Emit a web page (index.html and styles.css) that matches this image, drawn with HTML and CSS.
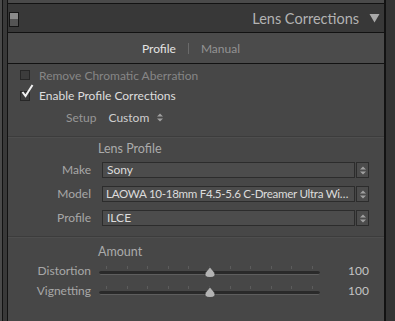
FILE: index.html
```html
<!DOCTYPE html>
<html>
<head>
<meta charset="utf-8">
<link rel="stylesheet" href="styles.css">
</head>
<body>
<div class="frame">
  <div class="edge"></div>
  <div class="rail"></div>
  <div class="main">
    <div class="prev"></div>
    <div class="panel">
      <div class="header">
        <div class="switch"><span class="sw-top"></span><span class="sw-bot"></span></div>
        <div class="title">Lens Corrections</div>
        <svg class="tri" width="11" height="10" viewBox="0 0 11 10"><path d="M0.5 1 L10.5 1 L5.5 9.5 Z" fill="#a9a9a9"/></svg>
      </div>
      <div class="tabs">
        <span class="tab active">Profile</span>
        <span class="tab-sep"></span>
        <span class="tab">Manual</span>
      </div>
      <div class="content">
        <div class="check-row dim">
          <span class="box"></span>
          <span>Remove Chromatic Aberration</span>
        </div>
        <div class="check-row on">
          <span class="box">
            <svg class="tick" width="16" height="16" viewBox="0 0 16 16"><path d="M2.5 9 L5.5 13 L12.5 2" fill="none" stroke="#f2f2f2" stroke-width="2"/></svg>
          </span>
          <span>Enable Profile Corrections</span>
        </div>
        <div class="setup-row">
          <span class="setup-label">Setup</span>
          <span class="setup-value">Custom</span>
          <svg class="updown" width="6" height="9" viewBox="0 0 6 9"><path d="M0 3.5 L3 0.5 L6 3.5 Z M0 5.5 L3 8.5 L6 5.5 Z" fill="#a0a0a0"/></svg>
        </div>
        <div class="sep"></div>
        <div class="heading">Lens Profile</div>
        <div class="form">
          <span class="label">Make</span>
          <div class="select"><span class="sel-text">Sony</span><span class="spin"><svg width="6" height="9" viewBox="0 0 6 9"><path d="M0 3.5 L3 0.5 L6 3.5 Z M0 5.5 L3 8.5 L6 5.5 Z" fill="#a0a0a0"/></svg></span></div>
          <span class="label">Model</span>
          <div class="select"><span class="sel-text long">LAOWA 10-18mm F4.5-5.6 C-Dreamer Ultra Wi…</span><span class="spin"><svg width="6" height="9" viewBox="0 0 6 9"><path d="M0 3.5 L3 0.5 L6 3.5 Z M0 5.5 L3 8.5 L6 5.5 Z" fill="#a0a0a0"/></svg></span></div>
          <span class="label">Profile</span>
          <div class="select"><span class="sel-text">ILCE</span><span class="spin"><svg width="6" height="9" viewBox="0 0 6 9"><path d="M0 3.5 L3 0.5 L6 3.5 Z M0 5.5 L3 8.5 L6 5.5 Z" fill="#a0a0a0"/></svg></span></div>
        </div>
        <div class="sep sep2"></div>
        <div class="heading heading2">Amount</div>
        <div class="sliders">
          <span class="label">Distortion</span>
          <div class="slider">
            <div class="ticks"><i></i><i></i><i></i><i></i><i></i><i></i><i></i><i></i><i></i><i></i><i></i></div>
            <div class="track"></div>
            <svg class="thumb" width="12" height="12" viewBox="0 0 12 12"><path d="M6 0.5 C7 3 11 6 11 8.5 C11 10.5 9.5 11.5 6 11.5 C2.5 11.5 1 10.5 1 8.5 C1 6 5 3 6 0.5 Z" fill="#b4b4b4" stroke="#3a3a3a" stroke-width="0.8"/></svg>
          </div>
          <span class="value">100</span>
          <span class="label">Vignetting</span>
          <div class="slider">
            <div class="ticks"><i></i><i></i><i></i><i></i><i></i><i></i><i></i><i></i><i></i><i></i><i></i></div>
            <div class="track"></div>
            <svg class="thumb" width="12" height="12" viewBox="0 0 12 12"><path d="M6 0.5 C7 3 11 6 11 8.5 C11 10.5 9.5 11.5 6 11.5 C2.5 11.5 1 10.5 1 8.5 C1 6 5 3 6 0.5 Z" fill="#b4b4b4" stroke="#3a3a3a" stroke-width="0.8"/></svg>
          </div>
          <span class="value">100</span>
        </div>
      </div>
    </div>
  </div>
  <div class="rail-r"></div>
</div>
</body>
</html>
```

FILE: styles.css
```css
* { box-sizing: border-box; }
html, body { margin: 0; padding: 0; }
body {
  width: 395px;
  height: 321px;
  overflow: hidden;
  background: #474747;
  font-family: Lato, "Open Sans", sans-serif;
  font-size: 12px;
  color: #b0b0b0;
}
.frame {
  display: flex;
  height: 321px;
}
.edge {
  width: 2px;
  background: #4a4a4a;
}
.rail {
  width: 5px;
  background: #393939;
  border-left: 1px solid #121212;
}
.main {
  width: 378px;
  display: flex;
  flex-direction: column;
  border-left: 1px solid #121212;
  border-right: 1px solid #121212;
}
.rail-r {
  flex: 1;
  background: #343434;
  border-left: 1px solid #121212;
}
.prev {
  height: 4px;
  background: #4a4a4a;
  border-bottom: 1px solid #121212;
}
.panel {
  flex: 1;
  display: flex;
  flex-direction: column;
  background: #474747;
}
.header {
  height: 29px;
  background: #383838;
  border-bottom: 1px solid #121212;
  display: flex;
  align-items: center;
  padding: 0 3px 0 1px;
}
.switch {
  width: 10px;
  height: 15px;
  border: 1px solid #141414;
  display: flex;
  flex-direction: column;
  margin-top: 2px;
}
.sw-top { flex: 1; background: #8a8a8a; }
.sw-bot { flex: 1; background: #545454; }
.title {
  margin-left: auto;
  font-size: 14.5px;
  color: #b3b3b3;
  margin-right: 10px;
  padding-top: 1px;
}
.tri { margin-right: 1px; }
.tabs {
  height: 31px;
  background: #4b4b4b;
  border-bottom: 1px solid #121212;
  display: flex;
  align-items: center;
  justify-content: center;
  padding-right: 10px;
  gap: 12px;
  padding-top: 1px;
}
.tab { color: #939393; }
.tab.active { color: #e4e4e4; }
.tab-sep {
  width: 1px;
  height: 11px;
  background: #6a6a6a;
}
.content {
  flex: 1;
  display: flex;
  flex-direction: column;
  padding-top: 1px;
}
.check-row {
  height: 20px;
  display: flex;
  align-items: center;
  padding-left: 12px;
  gap: 9px;
}
.check-row.dim { color: #868686; }
.check-row.on { color: #dedede; }
.box {
  position: relative;
  width: 10px;
  height: 10px;
  border: 1px solid #272727;
  background: #3c3c3c;
}
.check-row.on .box { margin-top: 2px; }
.tick {
  position: absolute;
  left: -1px;
  top: -9px;
}
.setup-row {
  height: 22px;
  display: flex;
  align-items: center;
  padding-left: 58px;
  margin-top: 1px;
}
.setup-label { color: #979797; }
.setup-value { color: #cfcfcf; margin-left: 12px; }
.updown { margin-left: 8px; }
.sep {
  margin-top: 8px;
  height: 2px;
  border-top: 1px solid #3c3c3c;
  border-bottom: 1px solid #4e4e4e;
}
.heading {
  height: 20px;
  display: flex;
  align-items: center;
  padding-left: 90px;
  color: #ababab;
  font-size: 12.5px;
}
.form {
  margin-top: 4px;
  display: grid;
  grid-template-columns: 83px minmax(0, 1fr);
  column-gap: 11px;
  row-gap: 8px;
  padding-right: 15px;
}
.label {
  text-align: right;
  color: #a8a8a8;
  line-height: 16px;
}
.select {
  height: 16px;
  display: flex;
  gap: 1px;
  min-width: 0;
}
.sel-text {
  flex: 1;
  min-width: 0;
  border: 1px solid #2c2c2c;
  background: #4c4c4c;
  color: #dcdcdc;
  padding-left: 4px;
  line-height: 14px;
  white-space: nowrap;
  overflow: hidden;
}
.sel-text.long {
  font-size: 11.6px;
  letter-spacing: -0.3px;
  padding-left: 3px;
}
.spin {
  width: 13px;
  flex: none;
  border: 1px solid #2c2c2c;
  background: #4c4c4c;
  display: flex;
  align-items: center;
  justify-content: center;
}
.sep2 { margin-top: 10px; }
.heading2 { margin-top: 3px; }
.sliders {
  margin-top: 2px;
  display: grid;
  grid-template-columns: 83px 221px 1fr;
  column-gap: 8px;
  row-gap: 4px;
  padding-right: 15px;
}
.sliders .label { line-height: 16px; }
.slider {
  position: relative;
  height: 16px;
}
.ticks {
  position: absolute;
  left: 7px;
  right: 7px;
  top: 3px;
  display: flex;
  justify-content: space-between;
}
.ticks i {
  width: 1px;
  height: 3px;
  background: #5c5c5c;
}
.track {
  position: absolute;
  left: 0;
  right: 0;
  top: 8px;
  height: 4px;
  border-radius: 2px;
  background: #2a2a2a;
  border-bottom: 1px solid #5e5e5e;
}
.thumb {
  position: absolute;
  left: 105px;
  top: 3px;
}
.value {
  text-align: right;
  color: #c4c4c4;
  line-height: 16px;
}
```
